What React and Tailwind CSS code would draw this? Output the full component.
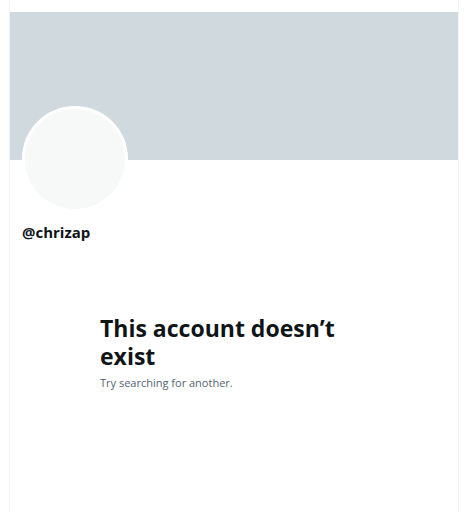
import React from "react";

const Profile = () => {
  return (
    <div className="min-h-[512px] bg-white font-['Open_Sans',sans-serif]">
      <div className="ml-[9px] w-[450px] min-h-[512px] border-x border-[#eff3f4] pt-[12px]">
        <div className="h-[148px] bg-[#cfd9de]" />
        <div className="px-[12px]">
          <div className="-mt-[54px] h-[106px] w-[106px] rounded-full border-[3px] border-white bg-[#f7f9f9]" />
          <div className="mt-[10px] text-[15px] font-bold leading-5 text-[#0f1419]">
            @chrizap
          </div>
        </div>
        <div className="mt-[72px] pl-[90px] pr-[100px]">
          <h1 className="text-[23px] font-bold leading-[28px] text-[#0f1419]">
            This account doesn’t exist
          </h1>
          <p className="mt-[5px] text-[11px] leading-4 text-[#536471]">
            Try searching for another.
          </p>
        </div>
      </div>
    </div>
  );
};

export default function App() {
  return <Profile />;
}
